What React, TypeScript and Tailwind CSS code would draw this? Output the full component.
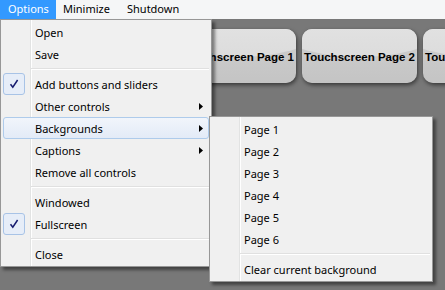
import React from "react";

const font = { fontFamily: '"Noto Sans", "Open Sans", sans-serif' };

function Arrow() {
  return (
    <svg width="4" height="7" viewBox="0 0 4 7" className="block">
      <path d="M0 0 L4 3.5 L0 7 Z" fill="#000" />
    </svg>
  );
}

function Check() {
  return (
    <svg width="10" height="10" viewBox="0 0 10 10" className="block">
      <path d="M1.5 5.2 L3.8 8.2 L8.6 1" fill="none" stroke="#151a6e" strokeWidth="1.5" />
    </svg>
  );
}

type Item =
  | { type: "sep" }
  | { type: "item"; label: string; checked?: boolean; sub?: boolean; hover?: boolean };

function Menu({ items, className }: { items: Item[]; className: string }) {
  return (
    <div
      className={
        "absolute border border-[#979797] bg-[#f0f0f0] py-[1px] shadow-[3px_3px_3px_rgba(0,0,0,0.45)] " +
        className
      }
    >
      <div className="absolute left-[29px] top-0 bottom-0 w-[2px] border-l border-[#e2e3e3] bg-white" />
      <div className="relative flex flex-col">
        {items.map((it, i) =>
          it.type === "sep" ? (
            <div key={i} className="h-[8px] flex flex-col justify-center pl-[30px] pr-[2px]">
              <div className="h-[1px] bg-[#e0e0e0]" />
              <div className="h-[1px] bg-white" />
            </div>
          ) : (
            <div
              key={i}
              className={
                "h-[22px] mx-[2px] flex items-center rounded-[3px] border " +
                (it.hover
                  ? "border-[#aecbeb] bg-gradient-to-b from-[#f1f5fb] to-[#e3ebf7]"
                  : "border-transparent")
              }
            >
              <div className="w-[31px] h-full flex items-center">
                {it.checked && (
                  <div className="ml-[-1px] w-[22px] h-[22px] rounded-[3px] border border-[#a8c3e6] bg-[#e6edf8] flex items-center justify-center">
                    <Check />
                  </div>
                )}
              </div>
              <span className="flex-1 text-[11px] text-black leading-none">{it.label}</span>
              {it.sub && (
                <div className="mr-[5px]">
                  <Arrow />
                </div>
              )}
            </div>
          )
        )}
      </div>
    </div>
  );
}

function TouchButton({ label }: { label: string }) {
  return (
    <div className="relative shrink-0 w-[115px] h-[54px] rounded-[10px] overflow-hidden flex items-center justify-center shadow-[1px_2px_4px_rgba(0,0,0,0.55)] bg-[linear-gradient(to_bottom,#cfcfcf_0%,#c4c4c4_100%)]">
      <div className="absolute left-[-30px] right-[-30px] top-[-40px] h-[68px] rounded-[50%] bg-[linear-gradient(to_bottom,#e8e8e8_0%,#dcdcdc_100%)]" />
      <span
        className="relative mt-[3px] text-[11.5px] font-bold text-black whitespace-nowrap"
        style={{ fontFamily: '"Liberation Sans", Arial, sans-serif' }}
      >
        {label}
      </span>
    </div>
  );
}

export default function App() {
  const mainItems: Item[] = [
    { type: "item", label: "Open" },
    { type: "item", label: "Save" },
    { type: "sep" },
    { type: "item", label: "Add buttons and sliders", checked: true },
    { type: "item", label: "Other controls", sub: true },
    { type: "item", label: "Backgrounds", sub: true, hover: true },
    { type: "item", label: "Captions", sub: true },
    { type: "item", label: "Remove all controls" },
    { type: "sep" },
    { type: "item", label: "Windowed" },
    { type: "item", label: "Fullscreen", checked: true },
    { type: "sep" },
    { type: "item", label: "Close" },
  ];
  const subItems: Item[] = [
    { type: "item", label: "Page 1" },
    { type: "item", label: "Page 2" },
    { type: "item", label: "Page 3" },
    { type: "item", label: "Page 4" },
    { type: "item", label: "Page 5" },
    { type: "item", label: "Page 6" },
    { type: "sep" },
    { type: "item", label: "Clear current background" },
  ];
  return (
    <div className="relative w-[445px] h-[290px] overflow-hidden bg-[#787878]" style={font}>
      <div className="h-[19px] bg-[#f5f6f7] flex items-stretch text-[11px] text-black">
        <div className="w-[56px] bg-[#3399ff] text-white flex items-center pl-[8px]">Options</div>
        <div className="w-[63px] flex items-center pl-[7px]">Minimize</div>
        <div className="flex items-center pl-[8px]">Shutdown</div>
      </div>
      <div className="flex gap-[6px] pl-[60px] pt-[10px]">
        <TouchButton label="Touchscreen Page 0" />
        <TouchButton label="Touchscreen Page 1" />
        <TouchButton label="Touchscreen Page 2" />
        <TouchButton label="Touchscreen Page 3" />
      </div>
      <Menu items={mainItems} className="left-0 top-[19px] w-[212px]" />
      <Menu items={subItems} className="left-[209px] top-[116px] w-[224px]" />
    </div>
  );
}
